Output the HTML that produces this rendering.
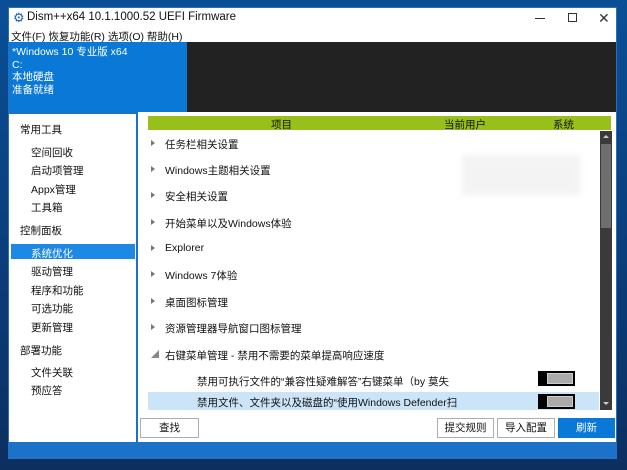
<!DOCTYPE html><html><head><meta charset="utf-8"><style>
*{margin:0;padding:0;box-sizing:border-box}
body{width:627px;height:470px;overflow:hidden;background:linear-gradient(180deg,#0a4f95,#0b3c78 60%,#0c2f60);font-family:"Liberation Sans","Noto Sans CJK SC",sans-serif;font-size:11px;color:#111;position:relative}
.a{position:absolute}
.win{left:8px;top:7px;width:609px;height:452px;background:#1a73c8;border:1px solid #2a6fb8}
.t{white-space:nowrap}
.side div{position:absolute;white-space:nowrap;font-size:10.5px}
.row{position:absolute;left:165px;font-size:10.5px;white-space:nowrap}
.tri{position:absolute;left:151px;width:0;height:0;border-left:4px solid #777;border-top:3px solid transparent;border-bottom:3px solid transparent}
.btn{position:absolute;top:418px;height:20px;border:1px solid #adadad;background:#fff;font-size:10.5px;text-align:center;line-height:18px}
.tg{position:absolute;left:538px;width:37px;height:15px;background:#000;padding:2px 2px 2px 9px}
.tg i{display:block;width:100%;height:100%;background:#aaa;border:1px solid #ccc}
</style></head><body>
<div class="a win"></div>
<div class="a" style="left:9px;top:8px;width:607px;height:34px;background:#fff"></div>
<div class="a t" style="left:13px;top:10px;font-size:13px;color:#1a5fb4">⚙</div>
<div class="a t" style="left:27px;top:11px;font-size:11.5px">Dism++x64 10.1.1000.52 UEFI Firmware</div>
<div class="a" style="left:535px;top:18px;width:10px;height:1px;background:#333"></div>
<div class="a" style="left:568px;top:13px;width:9px;height:9px;border:1px solid #333"></div>
<div class="a t" style="left:598px;top:10px;font-size:14px;color:#333">✕</div>
<div class="a t" style="left:11px;top:29px;font-size:10.5px">文件(F) 恢复功能(R) 选项(O) 帮助(H)</div>
<div class="a" style="left:9px;top:42px;width:178px;height:70px;background:#0a78d7"></div>
<div class="a" style="left:187px;top:42px;width:429px;height:70px;background:#222"></div>
<div class="a t" style="left:12px;top:46px;color:#fff;font-size:10.5px;line-height:12.5px">*Windows 10 专业版 x64<br>C:<br>本地硬盘<br>准备就绪</div>
<div class="a" style="left:9px;top:114px;width:127px;height:328px;background:#fff"></div>
<div class="a" style="left:11px;top:244px;width:124px;height:15px;background:#1e88e5"></div>
<div class="side">
<div style="left:20px;top:122px">常用工具</div>
<div style="left:31px;top:145px">空间回收</div>
<div style="left:31px;top:163px">启动项管理</div>
<div style="left:31px;top:182px">Appx管理</div>
<div style="left:31px;top:200px">工具箱</div>
<div style="left:20px;top:223px">控制面板</div>
<div style="left:31px;top:246px;color:#fff">系统优化</div>
<div style="left:31px;top:264px">驱动管理</div>
<div style="left:31px;top:283px">程序和功能</div>
<div style="left:31px;top:301px">可选功能</div>
<div style="left:31px;top:320px">更新管理</div>
<div style="left:20px;top:343px">部署功能</div>
<div style="left:31px;top:365px">文件关联</div>
<div style="left:31px;top:383px">预应答</div>
</div>
<div class="a" style="left:138px;top:112px;width:478px;height:330px;background:#fff"></div>
<div class="a" style="left:148px;top:116px;width:463px;height:14px;background:#97c11a"></div>
<div class="a t" style="left:271px;top:117px;font-size:10.5px">项目</div>
<div class="a t" style="left:444px;top:117px;font-size:10.5px">当前用户</div>
<div class="a t" style="left:553px;top:117px;font-size:10.5px">系统</div>
<div class="a" style="left:600px;top:131px;width:12px;height:279px;background:#3a3a3a"></div>
<div class="a" style="left:601px;top:144px;width:10px;height:84px;background:#6e6e6e"></div>
<div class="a" style="left:603px;top:135px;border-left:3px solid transparent;border-right:3px solid transparent;border-bottom:3px solid #ccc"></div>
<div class="a" style="left:603px;top:402px;border-left:3px solid transparent;border-right:3px solid transparent;border-top:3px solid #ccc"></div>
<div class="a" style="left:462px;top:155px;width:118px;height:40px;background:#f3f3f3;filter:blur(3px)"></div>
<div class="tri" style="top:140px"></div><div class="row" style="top:137px">任务栏相关设置</div>
<div class="tri" style="top:166px"></div><div class="row" style="top:163px">Windows主题相关设置</div>
<div class="tri" style="top:192px"></div><div class="row" style="top:189px">安全相关设置</div>
<div class="tri" style="top:219px"></div><div class="row" style="top:216px">开始菜单以及Windows体验</div>
<div class="tri" style="top:245px"></div><div class="row" style="top:242px">Explorer</div>
<div class="tri" style="top:271px"></div><div class="row" style="top:268px">Windows 7体验</div>
<div class="tri" style="top:298px"></div><div class="row" style="top:295px">桌面图标管理</div>
<div class="tri" style="top:324px"></div><div class="row" style="top:321px">资源管理器导航窗口图标管理</div>
<div class="a t" style="left:151px;top:349px;color:#888;font-size:8px">◢</div><div class="row" style="top:348px">右键菜单管理 - 禁用不需要的菜单提高响应速度</div>
<div class="row" style="left:197px;top:374px">禁用可执行文件的“兼容性疑难解答”右键菜单（by 莫失</div>
<div class="tg" style="top:371px"><i></i></div>
<div class="a" style="left:148px;top:392px;width:451px;height:18px;background:#cce4f7"></div>
<div class="row" style="left:197px;top:395px">禁用文件、文件夹以及磁盘的“使用Windows Defender扫</div>
<div class="tg" style="top:394px"><i></i></div>
<div class="btn" style="left:140px;width:59px">查找</div>
<div class="btn" style="left:437px;width:57px">提交规则</div>
<div class="btn" style="left:497px;width:58px">导入配置</div>
<div class="btn" style="left:558px;width:57px;background:#0a78d7;border-color:#0a78d7;color:#fff">刷新</div>
</body></html>
